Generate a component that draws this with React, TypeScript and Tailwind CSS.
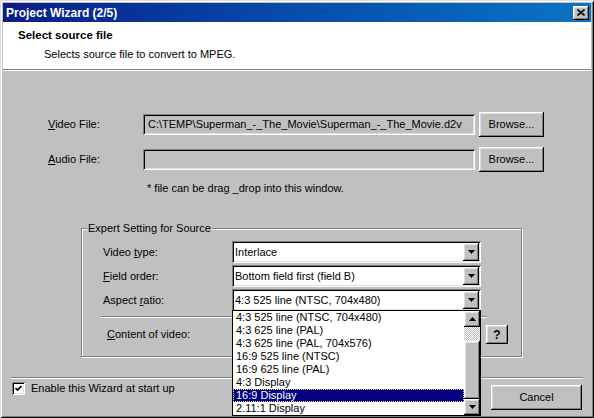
import React from 'react';

const raised =
  'shadow-[inset_-1px_-1px_#000000,inset_1px_1px_#ffffff,inset_-2px_-2px_#808080,inset_2px_2px_#dfdfdf]';
const sunken =
  'shadow-[inset_1px_1px_#808080,inset_-1px_-1px_#ffffff,inset_2px_2px_#000000,inset_-2px_-2px_#dfdfdf]';

const aspectOptions = [
  '4:3 525 line (NTSC, 704x480)',
  '4:3 625 line (PAL)',
  '4:3 625 line (PAL, 704x576)',
  '16:9 525 line (NTSC)',
  '16:9 625 line (PAL)',
  '4:3 Display',
  '16:9 Display',
  '2.11:1 Display',
];

const ArrowDown = () => (
  <svg width="7" height="4" viewBox="0 0 7 4">
    <polygon points="0,0 7,0 3.5,4" fill="#000" />
  </svg>
);

const ArrowUp = () => (
  <svg width="7" height="4" viewBox="0 0 7 4">
    <polygon points="0,4 7,4 3.5,0" fill="#000" />
  </svg>
);

const Combo: React.FC<{ value: string; children?: React.ReactNode }> = ({ value, children }) => (
  <div className={`relative w-[249px] h-[22px] bg-white flex items-center ${sunken}`}>
    <span className="pl-[3px] flex-1 whitespace-nowrap leading-[13px]">{value}</span>
    <div className={`w-[16px] h-[18px] mr-[2px] bg-[#c0c0c0] flex items-center justify-center ${raised}`}>
      <ArrowDown />
    </div>
    {children}
  </div>
);

const Button: React.FC<{ className: string; children: React.ReactNode }> = ({ className, children }) => (
  <div className={`bg-[#c0c0c0] flex items-center justify-center ${raised} ${className}`}>{children}</div>
);

export default function App() {
  return (
    <div className="w-[594px] h-[418px] bg-[#c0c0c0] p-[3px] flex flex-col text-[11px] text-black font-['Liberation_Sans',Arial,sans-serif] shadow-[inset_1px_1px_#dfdfdf,inset_-1px_-1px_#000000,inset_2px_2px_#ffffff,inset_-2px_-2px_#808080]">
      {/* Title bar */}
      <div className="h-[19px] flex items-center justify-between pl-[3px] pr-[2px] bg-gradient-to-r from-[#0a1c88] via-[#084cac] to-[#0c74c4]">
        <span className="text-white font-bold text-[12px] leading-[14px]">Project Wizard (2/5)</span>
        <Button className="w-[16px] h-[14px]">
          <svg width="8" height="7" viewBox="0 0 8 7">
            <path d="M0.5 0.5 L7.5 6.5 M7.5 0.5 L0.5 6.5" stroke="#000" strokeWidth="1.6" />
          </svg>
        </Button>
      </div>

      {/* Header */}
      <div className="h-[47px] bg-white pl-[15px] pt-[6px]">
        <div className="font-bold text-[11.5px] leading-[14px]">Select source file</div>
        <div className="pl-[26px] mt-[6px] leading-[13px]">Selects source file to convert to MPEG.</div>
      </div>
      <div className="h-px bg-[#808080]" />
      <div className="h-px bg-white" />

      {/* Body */}
      <div className="flex flex-col">
        <div className="mt-[41px] h-[25px] flex items-center pl-[45px]">
          <span className="w-[95px]">
            <u>V</u>ideo File:
          </span>
          <div className={`w-[332px] h-[21px] flex items-center pl-[5px] whitespace-nowrap ${sunken}`}>
            C:\TEMP\Superman_-_The_Movie\Superman_-_The_Movie.d2v
          </div>
          <Button className="ml-[4px] w-[65px] h-[25px]">Browse...</Button>
        </div>

        <div className="mt-[10px] h-[25px] flex items-center pl-[45px]">
          <span className="w-[95px]">
            <u>A</u>udio File:
          </span>
          <div className={`w-[332px] h-[21px] ${sunken}`} />
          <Button className="ml-[4px] w-[65px] h-[25px]">Browse...</Button>
        </div>

        <div className="mt-[10px] pl-[144px] leading-[13px]">* file can be drag _drop into this window.</div>

        {/* Expert settings group */}
        <div className="mt-[33px] ml-[78px] w-[441px] h-[129px] relative border border-[#808080] shadow-[1px_1px_0_#ffffff,inset_1px_1px_0_#ffffff] pt-[12px]">
          <span className="absolute -top-[7px] left-[5px] px-[1px] bg-[#c0c0c0] leading-[13px]">
            Expert Setting for Source
          </span>

          <div className="flex items-center pl-[21px]">
            <span className="w-[129px]">
              Video <u>t</u>ype:
            </span>
            <Combo value="Interlace" />
          </div>
          <div className="mt-[2px] flex items-center pl-[21px]">
            <span className="w-[129px]">
              <u>F</u>ield order:
            </span>
            <Combo value="Bottom field first (field B)" />
          </div>
          <div className="mt-[2px] flex items-center pl-[21px]">
            <span className="w-[129px]">
              Aspect <u>r</u>atio:
            </span>
            <Combo value="4:3 525 line (NTSC, 704x480)">
              {/* Open dropdown list */}
              <div className="absolute top-[21px] left-0 z-10 w-[249px] h-[106px] bg-white border border-black flex">
                <div className="flex-1 flex flex-col">
                  {aspectOptions.map((opt, i) =>
                    i === 6 ? (
                      <div
                        key={opt}
                        className="h-[13px] leading-[11px] px-[2px] bg-[#000080] text-white border border-dotted border-[#e8e890] whitespace-nowrap"
                      >
                        {opt}
                      </div>
                    ) : (
                      <div key={opt} className="h-[13px] leading-[13px] px-[3px] whitespace-nowrap">
                        {opt}
                      </div>
                    )
                  )}
                </div>
                <div className="w-[16px] flex flex-col">
                  <Button className="w-[16px] h-[16px]">
                    <ArrowUp />
                  </Button>
                  <div className="h-[14px] bg-[repeating-conic-gradient(#ffffff_0_25%,#c0c0c0_0_50%)] bg-[length:2px_2px]" />
                  <div className={`flex-1 bg-[#c0c0c0] ${raised}`} />
                  <Button className="w-[16px] h-[16px]">
                    <ArrowDown />
                  </Button>
                </div>
              </div>
            </Combo>
          </div>

          <div className="mt-[5px] ml-[19px] w-[386px] h-px bg-[#808080] shadow-[0_1px_0_#ffffff]" />

          <div className="mt-[8px] flex items-center pl-[25px]">
            <span className="w-[125px]">
              <u>C</u>ontent of video:
            </span>
            <div className="w-[249px] h-[19px]" />
            <Button className="ml-[5px] w-[22px] h-[19px] font-bold text-[12px]">?</Button>
          </div>
        </div>

        <div className="mt-[20px] ml-[8px] w-[572px] h-px bg-[#808080] shadow-[0_1px_0_#ffffff]" />

        <div className="flex items-start">
          <div className={`mt-[4px] ml-[9px] w-[13px] h-[13px] bg-white flex items-center justify-center ${sunken}`}>
            <svg width="7" height="7" viewBox="0 0 7 7">
              <path d="M0.5 3 L2.5 5 L6.5 1" stroke="#000" strokeWidth="1.7" fill="none" />
            </svg>
          </div>
          <span className="ml-[6px] mt-[4px] leading-[13px]">Enable this Wizard at start up</span>
          <Button className="ml-auto mr-[9px] mt-[7px] w-[91px] h-[25px]">Cancel</Button>
        </div>
      </div>
    </div>
  );
}
